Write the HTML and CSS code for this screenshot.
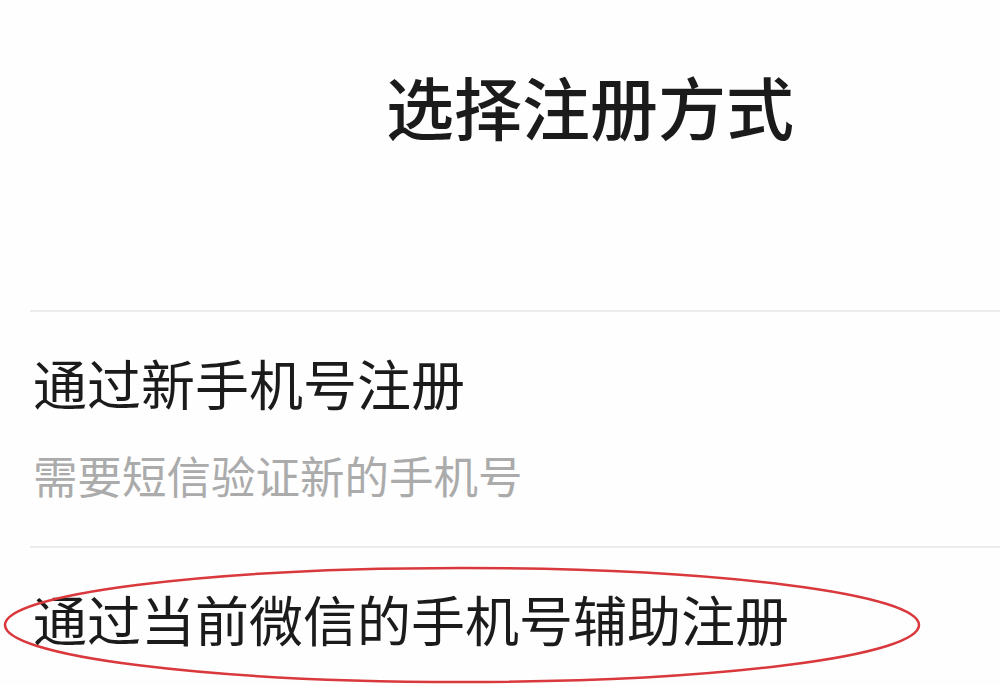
FILE: index.html
```html
<!DOCTYPE html>
<html lang="zh-CN">
<head>
    <meta charset="UTF-8">
    <meta name="viewport" content="width=device-width, initial-scale=1.0">
    <link rel="stylesheet" href="styles.css">
    <title>选择注册方式</title>
</head>
<body>

<div class="page">
    <h1 class="title">选择注册方式</h1>

    <div class="options">
        <div class="option">
            <div class="option-name">通过新手机号注册</div>
            <div class="option-desc">需要短信验证新的手机号</div>
        </div>
        <div class="option option-marked">
            <div class="option-name">通过当前微信的手机号辅助注册</div>
            <svg class="circle-mark" width="930" height="124" viewBox="0 0 930 124">
                <ellipse cx="462" cy="62" rx="457" ry="57" fill="none" stroke="#d9383c" stroke-width="2.5"/>
            </svg>
        </div>
    </div>
</div>

</body>
</html>
```

FILE: styles.css
```css
body {
    margin: 0;
    background: #fefefe;
    font-family: "Noto Sans CJK SC", "Noto Sans", sans-serif;
    color: #1b1b1b;
}

.page {
    width: 1000px;
    height: 685px;
    overflow: hidden;
}

.title {
    margin: 0;
    padding: 66px 0 0 386px;
    font-size: 68px;
    font-weight: 500;
    line-height: 80px;
    letter-spacing: 0;
}

.options {
    margin-top: 164px;
    margin-left: 30px;
}

.option {
    border-top: 2px solid #ececec;
    padding: 39px 0 45px 3px;
    position: relative;
}

.option-name {
    font-size: 54px;
    line-height: 64px;
}

.option-desc {
    margin-top: 34px;
    font-size: 44.5px;
    line-height: 52px;
    color: #ababab;
}

.circle-mark {
    position: absolute;
    left: -30px;
    top: 15px;
}
```
